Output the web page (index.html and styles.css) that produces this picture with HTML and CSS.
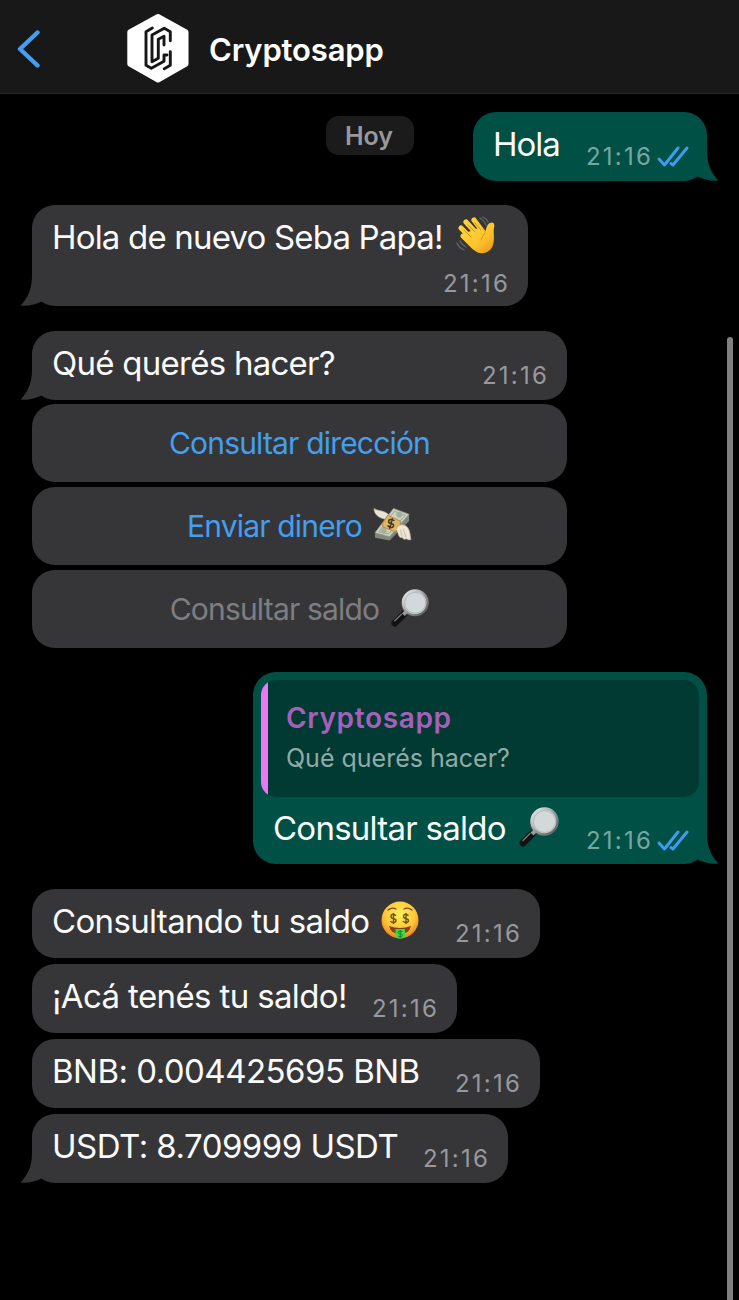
FILE: index.html
```html
<!DOCTYPE html>
<html lang="es">
<head>
<meta charset="utf-8">
<title>Cryptosapp</title>
<link rel="stylesheet" href="styles.css">
</head>
<body>
<svg class="defs" aria-hidden="true">
  <defs>
    <linearGradient id="skin" x1="0" y1="0" x2="1" y2="1"><stop offset="0" stop-color="#ffd83e"/><stop offset=".6" stop-color="#fdc32e"/><stop offset="1" stop-color="#e8920f"/></linearGradient>
    <radialGradient id="face" cx=".5" cy=".35" r=".68"><stop offset="0" stop-color="#fff05a"/><stop offset=".6" stop-color="#fdc638"/><stop offset="1" stop-color="#e8791c"/></radialGradient>
    <linearGradient id="rim" x1="0" y1="0" x2="1" y2="1"><stop offset="0" stop-color="#f2f2f2"/><stop offset=".5" stop-color="#999b9e"/><stop offset="1" stop-color="#555"/></linearGradient>
    <symbol id="tail" viewBox="0 0 32 30"><path d="M12 0C12 14 7 23 .5 29.5Q12 30.500 21.500 25.500L31 10 14 0Z" fill="currentColor"/></symbol>
    <symbol id="ticks" viewBox="0 0 32 22"><path d="M2 13 7.500 19 21 2M14 17.500 16 19 30 2" fill="none" stroke="#3d9ef0" stroke-width="2.900" stroke-linecap="round" stroke-linejoin="round"/></symbol>
    <symbol id="lens" viewBox="0 0 40 40">
      <path d="M4 36 13 27" stroke="#111" stroke-width="7" stroke-linecap="round"/>
      <path d="M4 33.500 11 26.500" stroke="#777" stroke-width="1.500" stroke-linecap="round"/>
      <path d="M13 27 17 23" stroke="#999" stroke-width="4"/>
      <circle cx="25.500" cy="14.500" r="13" fill="#d3d8da" stroke="url(#rim)" stroke-width="2.500"/>
      <circle cx="25.500" cy="14.500" r="11" fill="none" stroke="#a9afb1" stroke-width=".8"/>
    </symbol>
    <symbol id="wave" viewBox="0 0 40 40">
      <path d="M24 2Q28 4 30 9M27 1Q31 3 32 6M1 27Q3 32 8 34M4 25Q6 29 10 31" fill="none" stroke="#62676c" stroke-width="1.300" stroke-linecap="round"/>
      <path d="M7 20 18 31M5 12 18 25M10 6 22 19M18 4 27 16" stroke="url(#skin)" stroke-width="5.200" stroke-linecap="round"/>
      <path d="M7 18 25 11 29 17C30 13 31 8 34 7 38 5 39 9 38 12 37 16 39 22 37 29 34 38 23 40 17 33L5 21Z" fill="url(#skin)"/>
      <path d="M8 14 15 21M12 9 19 16M19 7 25 14M29 17Q26 20 25 24" fill="none" stroke="#d9960e" stroke-width="1" stroke-linecap="round"/>
    </symbol>
    <symbol id="money" viewBox="0 0 40 36">
      <path d="M13 12C6 11 1 7 1 1 4 3 7 3 10 4 14 5 16 7 18 10Z" fill="#e8e4d3" stroke="#b6ae98" stroke-width=".7"/>
      <path d="M2 27 21 3 37 8 37 14 17 34 2 31Z" fill="#7f887a"/>
      <path d="M2 26 21 1 37 7 17 30Z" fill="#cdd1c1" stroke="#8f9788" stroke-width=".8"/>
      <path d="M6 25 22 4 33 8 16 27Z" fill="none" stroke="#8c9585" stroke-width=".8"/>
      <circle cx="27" cy="7.500" r="3" fill="#a7ae9d"/><circle cx="11" cy="24" r="3" fill="#a7ae9d"/>
      <path d="M10 16 15 8 28 14 28 19 23 25 10 20Z" fill="#e0b667" stroke="#b57a27" stroke-width=".8"/>
      <path d="M22 13.500Q16 11 16 14.500C16 18 22 15.500 21 19 20 22 16 20 15 18.500M20 11 17 22" fill="none" stroke="#443723" stroke-width="1.600"/>
      <path d="M24 22C26 17 30 17 34 19 38 22 38 28 39 33 36 34 34 32 34 32 32 34 30 31 30 31 27 32 26 28 26 28 23 27 24 22Z" fill="#ebe6d5" stroke="#aaa28b" stroke-width=".7"/>
      <path d="M28 23 30 30M31 22 34 31" stroke="#bcb49e" stroke-width=".8"/>
    </symbol>
    <symbol id="rich" viewBox="0 0 38 38">
      <circle cx="19" cy="19" r="18.500" fill="url(#face)"/>
      <path d="M7 9Q11 6 15 8M23 8Q27 6 31 9" fill="none" stroke="#755018" stroke-width="1.300" stroke-linecap="round"/>
      <g fill="none" stroke="#6b5618" stroke-width="1.400"><path d="M15 14.500Q10 12 10 15.500C10 19 15.500 16.500 15 20 14 23 10 21 9.500 20M12.500 12V23"/><path d="M27.500 14.500Q22.500 12 22.500 15.500C22.500 19 28 16.500 27.500 20 26.500 23 22.500 21 22 20M25 12V23"/></g>
      <path d="M8 25Q19 29 30 25 28 33 19 33 10 33 8 25Z" fill="#81421d"/>
      <path d="M14.500 28H24V36Q19 39 14.500 36Z" fill="#3edb45"/>
      <path d="M21.500 30.500Q17 29 17 31.500C17 34 22 32 21.500 34.500 21 36.500 18 36 17 35M19.300 29V37" fill="none" stroke="#138321" stroke-width="1"/>
    </symbol>
  </defs>
</svg>
<header class="topbar">
  <svg class="back" viewBox="0 0 24 40"><path d="M20.500 3.500 3 20 20.500 36.500" fill="none" stroke="#439ff0" stroke-width="4.400" stroke-linecap="round" stroke-linejoin="round"/></svg>
  <svg class="logo" viewBox="0 0 62 70">
    <path d="M31 3.500 59 19V51L31 67 2.800 51V19Z" fill="#fff" stroke="#fff" stroke-width="5" stroke-linejoin="round"/>
    <g fill="none" stroke="#161616" stroke-width="2.900" stroke-linecap="round" stroke-linejoin="round"><path d="M25.300 15 19 18.700V52.300L24.300 55.300 37 48.300V42H40"/><path d="M43.300 27.700V18.700L37.300 15.300 25 22V48.700L31.300 45.300V26.300L37 23.300V32"/><path d="M43.300 38.700V52.300L37.300 55.700"/></g>
  </svg>
  <h1 class="title">Cryptosapp</h1>
</header>
<main class="chat">
  <div class="first">
    <span class="day">Hoy</span>
    <article class="bubble out hola"><span class="text t-hola">Hola</span><span class="meta"><time>21:16</time><svg class="ticks"><use href="#ticks"/></svg></span><svg class="tail"><use href="#tail"/></svg></article>
  </div>
  <article class="bubble in welcome"><div class="row"><span class="text t-welcome">Hola de nuevo Seba Papa!</span><svg class="emoji"><use href="#wave"/></svg></div><span class="meta"><time>21:16</time></span><svg class="tail"><use href="#tail"/></svg></article>
  <section class="prompt">
    <article class="bubble in"><span class="text t-ask">Qué querés hacer?</span><span class="meta"><time>21:16</time></span><svg class="tail"><use href="#tail"/></svg></article>
    <button class="option"><span>Consultar dirección</span></button>
    <button class="option"><span>Enviar dinero</span><svg class="cash"><use href="#money"/></svg></button>
    <button class="option used"><span>Consultar saldo</span><svg class="glass"><use href="#lens"/></svg></button>
  </section>
  <article class="bubble out reply">
    <blockquote class="quote"><span class="author">Cryptosapp</span><span class="quoted">Qué querés hacer?</span></blockquote>
    <div class="line"><span class="text t-reply">Consultar saldo</span><svg class="emoji"><use href="#lens"/></svg><span class="meta"><time>21:16</time><svg class="ticks"><use href="#ticks"/></svg></span></div>
    <svg class="tail"><use href="#tail"/></svg>
  </article>
  <section class="results">
    <article class="bubble in w508"><span class="text t-checking">Consultando tu saldo</span><svg class="emoji rich"><use href="#rich"/></svg><span class="meta"><time>21:16</time></span></article>
    <article class="bubble in w425"><span class="text t-here">¡Acá tenés tu saldo!</span><span class="meta"><time>21:16</time></span></article>
    <article class="bubble in w508"><span class="text t-amount">BNB: 0.004425695 BNB</span><span class="meta"><time>21:16</time></span></article>
    <article class="bubble in w476"><span class="text t-amount">USDT: 8.709999 USDT</span><span class="meta"><time>21:16</time></span><svg class="tail"><use href="#tail"/></svg></article>
  </section>
</main>
<div class="scrollbar"></div>
</body>
</html>
```
FILE: styles.css
```css
* { box-sizing: border-box; }
body {
  margin: 0;
  width: 739px;
  height: 1300px;
  overflow: hidden;
  position: relative;
  background: #000;
  color: #fafafa;
  font-family: Inter, "Liberation Sans", sans-serif;
}
svg { display: block; flex: none; }
.defs { position: absolute; width: 0; height: 0; }
.topbar {
  height: 94px;
  display: flex;
  align-items: flex-start;
  background: #181818;
  border-bottom: 1px solid #272727;
}
.back { width: 24px; height: 40px; margin: 29px 0 0 17px; }
.logo { width: 62px; height: 70px; margin: 13px 0 0 86px; }
.title { margin: 31px 0 0 20px; font-size: 31px; line-height: 38px; font-weight: 600; letter-spacing: -0.15px; color: #fff; }
.chat { padding: 18px 32px 0; }
.first { display: flex; justify-content: flex-end; align-items: flex-start; }
.day {
  width: 88px;
  height: 39px;
  margin: 4px 59px 0 0;
  padding-right: 2px;
  border-radius: 13px;
  background: #1b1b1c;
  color: #99999d;
  font-size: 25px;
  font-weight: 600;
  line-height: 41px;
  text-align: center;
}
.bubble { position: relative; display: flex; border-radius: 23px; padding: 12px 20px 0; height: 68.500px; }
.in { background: #363638; color: #363638; }
.out { background: #005046; color: #005046; }
.text { color: #fafafa; font-size: 33px; line-height: 40px; white-space: nowrap; }
.t-hola { letter-spacing: -1px; }
.t-welcome { letter-spacing: -0.82px; }
.t-ask { letter-spacing: -0.74px; }
.t-reply { letter-spacing: -0.75px; }
.t-checking { letter-spacing: -0.66px; }
.t-here { letter-spacing: -0.63px; }
.t-amount { letter-spacing: -0.53px; }
.meta { display: flex; align-items: flex-start; margin: 17.500px -2px 0 auto; color: #98989d; font-size: 24px; line-height: 29px; letter-spacing: 2.200px; }
.out .meta { color: #79a69f; }
.ticks { width: 32px; height: 22px; margin: 4px 0 0 4px; }
.tail { position: absolute; left: -12px; bottom: 0; width: 32px; height: 30px; }
.out .tail { left: auto; right: -12px; transform: scaleX(-1); }
.emoji { width: 40px; height: 40px; margin: -1px 0 0 13px; }
.hola { width: 234px; }
.welcome { width: 496px; height: 101px; margin-top: 24.500px; flex-direction: column; }
.row { display: flex; height: 40px; }
.welcome .meta { margin-top: 11.500px; }
.prompt { width: 535px; margin-top: 25px; display: grid; gap: 4.700px; }
.option {
  height: 78px;
  border: 0;
  border-radius: 23px;
  padding: 0;
  background: #363638;
  color: #439ff0;
  font: 30px/78px Inter, "Liberation Sans", sans-serif;
  letter-spacing: -0.82px;
  white-space: nowrap;
  display: flex;
  justify-content: center;
  align-items: center;
}
.used { color: #7e7e82; }
.cash { width: 39px; height: 36px; margin: 0 0 1px 11px; }
.glass { width: 38px; height: 38px; margin: 0 0 1px 12px; }
.reply { display: block; width: 454px; height: 192px; margin: 24.500px 0 0 auto; padding: 8px; }
.quote {
  height: 117px;
  margin: 0;
  display: flex;
  flex-direction: column;
  padding: 19px 0 0 25px;
  border-radius: 15px;
  background: linear-gradient(90deg, #ea78f5 7px, #003a33 7px);
}
.author { color: #a85fba; font-size: 28px; line-height: 38px; font-weight: 600; letter-spacing: 0.65px; }
.quoted { color: #90aba8; font-size: 25px; line-height: 43px; }
.line { display: flex; padding: 11px 12px 0; }
.line .meta { margin-top: 17.500px; }
.results { display: grid; gap: 6.500px; margin-top: 25px; }
.w508 { width: 508px; }
.w425 { width: 425px; }
.w476 { width: 476px; }
.emoji.rich { width: 38px; height: 38px; margin: 0 0 0 12px; }
.scrollbar { position: absolute; left: 727px; top: 337px; width: 6px; height: 970px; border-radius: 3px; background: #808080; }
```
